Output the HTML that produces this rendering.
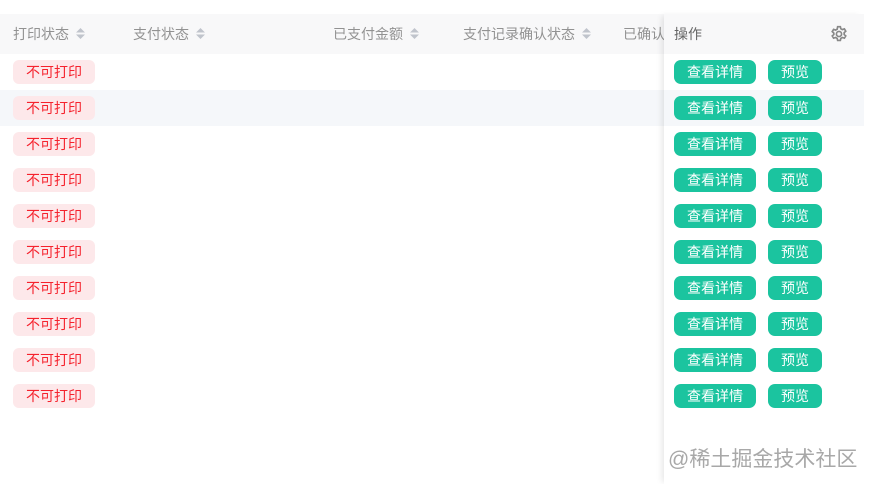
<!DOCTYPE html>
<html><head><meta charset="utf-8"><style>
*{margin:0;padding:0;box-sizing:border-box}
body{width:872px;height:484px;background:#fff;font-family:"Liberation Sans","Noto Sans CJK SC",sans-serif;position:relative;overflow:hidden}
.hd{position:absolute;left:0;top:14px;width:864px;height:40px;background:#f8f8f9}
.th{position:absolute;top:14px;height:40px;line-height:40px;font-size:14px;color:#929292}
.sort{display:inline-block;vertical-align:middle;margin-left:6px;margin-top:-3px}
.row{position:absolute;left:0;width:864px;height:36px}
.tag{position:absolute;left:13px;width:82px;height:24px;line-height:24px;text-align:center;background:#fde8ea;color:#f5222d;font-size:14px;border-radius:6px}
.fix{position:absolute;left:664px;top:14px;width:200px;height:470px;background:#fff;box-shadow:-4px 0 6px -2px rgba(0,0,0,0.10)}
.fhd{position:absolute;left:0;top:0;width:200px;height:40px;background:#f8f8f9;font-size:14px;color:#666;line-height:40px;padding-left:10px}
.b{position:absolute;height:24px;line-height:24px;text-align:center;background:#1bc49f;color:#fff;font-size:14px;border-radius:7px}
.wm{position:absolute;left:668px;top:443px;font-size:21px;color:#a8a8a8}
</style></head><body>
<div class="hd"></div>
<div class="th" style="left:13px">打印状态<svg class="sort" width="11" height="13"><path d="M5.5 1L10 5.5H1Z M5.5 12L10 7.5H1Z" fill="#c0c4cc"/></svg></div>
<div class="th" style="left:133px">支付状态<svg class="sort" width="11" height="13"><path d="M5.5 1L10 5.5H1Z M5.5 12L10 7.5H1Z" fill="#c0c4cc"/></svg></div>
<div class="th" style="left:333px">已支付金额<svg class="sort" width="11" height="13"><path d="M5.5 1L10 5.5H1Z M5.5 12L10 7.5H1Z" fill="#c0c4cc"/></svg></div>
<div class="th" style="left:463px">支付记录确认状态<svg class="sort" width="11" height="13"><path d="M5.5 1L10 5.5H1Z M5.5 12L10 7.5H1Z" fill="#c0c4cc"/></svg></div>
<div class="th" style="left:623px">已确认</div>
<div class="row" style="top:90px;background:#f5f7fa"></div>
<div class="tag" style="top:60px">不可打印</div>
<div class="tag" style="top:96px">不可打印</div>
<div class="tag" style="top:132px">不可打印</div>
<div class="tag" style="top:168px">不可打印</div>
<div class="tag" style="top:204px">不可打印</div>
<div class="tag" style="top:240px">不可打印</div>
<div class="tag" style="top:276px">不可打印</div>
<div class="tag" style="top:312px">不可打印</div>
<div class="tag" style="top:348px">不可打印</div>
<div class="tag" style="top:384px">不可打印</div>
<div class="fix">
<div class="fhd">操作
<svg style="position:absolute;left:166px;top:11px" width="18" height="18" viewBox="0 0 16 16"><g fill="none" stroke="#888" stroke-width="1.5"><circle cx="8" cy="8" r="2.3"/><path d="M6.8 1.5h2.4l.4 1.8 1.4.8 1.8-.6 1.2 2-1.4 1.3v1.6l1.4 1.3-1.2 2-1.8-.6-1.4.8-.4 1.8H6.8l-.4-1.8-1.4-.8-1.8.6-1.2-2 1.4-1.3V7.2L2 5.9l1.2-2 1.8.6 1.4-.8z"/></g></svg>
</div>
<div style="position:absolute;left:0;top:76px;width:200px;height:36px;background:#f5f7fa"></div>
<div class="b" style="left:10px;top:46px;width:82px">查看详情</div><div class="b" style="left:104px;top:46px;width:54px">预览</div>
<div class="b" style="left:10px;top:82px;width:82px">查看详情</div><div class="b" style="left:104px;top:82px;width:54px">预览</div>
<div class="b" style="left:10px;top:118px;width:82px">查看详情</div><div class="b" style="left:104px;top:118px;width:54px">预览</div>
<div class="b" style="left:10px;top:154px;width:82px">查看详情</div><div class="b" style="left:104px;top:154px;width:54px">预览</div>
<div class="b" style="left:10px;top:190px;width:82px">查看详情</div><div class="b" style="left:104px;top:190px;width:54px">预览</div>
<div class="b" style="left:10px;top:226px;width:82px">查看详情</div><div class="b" style="left:104px;top:226px;width:54px">预览</div>
<div class="b" style="left:10px;top:262px;width:82px">查看详情</div><div class="b" style="left:104px;top:262px;width:54px">预览</div>
<div class="b" style="left:10px;top:298px;width:82px">查看详情</div><div class="b" style="left:104px;top:298px;width:54px">预览</div>
<div class="b" style="left:10px;top:334px;width:82px">查看详情</div><div class="b" style="left:104px;top:334px;width:54px">预览</div>
<div class="b" style="left:10px;top:370px;width:82px">查看详情</div><div class="b" style="left:104px;top:370px;width:54px">预览</div>
</div>
<div class="wm">@稀土掘金技术社区</div>
</body></html>
